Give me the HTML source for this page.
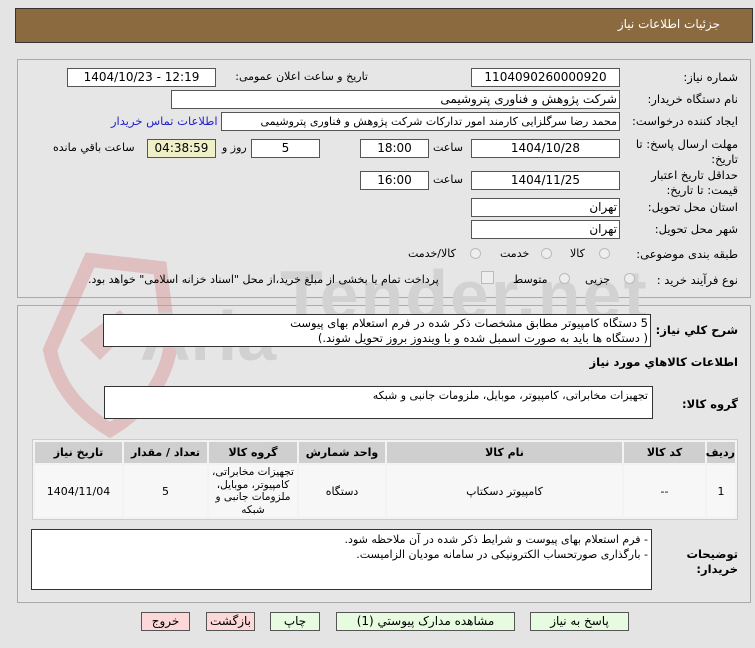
<!DOCTYPE html>
<html><head><meta charset="utf-8"><style>
body{margin:0;width:755px;height:648px;background:#e4e4e4;font-family:"DejaVu Sans","Liberation Sans",sans-serif;font-size:11px;color:#000;position:relative;overflow:hidden}
.a{position:absolute;white-space:nowrap}
.in{position:absolute;background:#fff;border:1px solid #555;box-sizing:border-box;height:19px;line-height:17px;text-align:center;font-size:12px;overflow:hidden}
.r{direction:rtl}
.lab{position:absolute;direction:rtl;text-align:right;right:17px;font-size:11.5px;white-space:nowrap}
.rad{position:absolute;width:11px;height:11px;border-radius:50%;border:1px solid #bbb;background:#eee;box-sizing:border-box}
.btn{position:absolute;top:612px;height:19px;border:1px solid #555;box-sizing:border-box;background:#e6fbe0;text-align:center;line-height:17px;font-size:12px}
table{border-collapse:separate;border-spacing:2px;position:absolute;left:32px;top:439px;width:706px;background:#f3f3f3;border:1px solid #ccc;table-layout:fixed}
th{background:#cfcfcf;height:21px;font-size:11px;padding:0}
td{background:#f7f7f7;text-align:center;font-size:11px;height:52px;padding:0;overflow:hidden}
</style></head><body>
<div class="a" style="left:15px;top:8px;width:738px;height:35px;background:#8b6a40;border:1px solid #333;box-sizing:border-box"></div>
<div class="a r" style="right:35px;top:17px;color:#fff;font-size:12px">جزئیات اطلاعات نیاز</div>

<div class="a" style="left:17px;top:59px;width:734px;height:239px;border:1px solid #aaa;box-sizing:border-box;background:#e6e6e6"></div>
<div class="a" style="left:17px;top:305px;width:734px;height:298px;border:1px solid #aaa;box-sizing:border-box;background:#e6e6e6"></div>

<!-- watermark -->
<svg class="a" style="left:20px;top:250px;opacity:.45" width="260" height="200" viewBox="0 0 260 200">
<path d="M70 10 L140 18 L150 100 Q140 150 90 180 Q40 150 30 100 Z" fill="none" stroke="#d89090" stroke-width="14"/>
<path d="M60 90 L100 60 L115 75 L80 110 Z" fill="#d89898"/>
<text x="120" y="110" font-family="Liberation Sans" font-size="70" font-weight="bold" fill="#b8b8b8">Aria</text>
</svg>
<div class="a" style="left:280px;top:255px;font-size:70px;font-weight:bold;color:#d2d2d2;letter-spacing:2px;font-family:'Liberation Sans'">Tender.net</div>

<div class="lab" style="top:70px">شماره نیاز:</div>
<div class="in" style="left:471px;top:68px;width:149px">1104090260000920</div>
<div class="a r" style="left:220px;top:70px;width:148px;text-align:right">تاریخ و ساعت اعلان عمومی:</div>
<div class="in" style="left:67px;top:68px;width:149px">1404/10/23 - 12:19</div>

<div class="lab" style="top:92px">نام دستگاه خریدار:</div>
<div class="in r" style="left:171px;top:90px;width:449px;text-align:right;padding-right:2px">شرکت پژوهش و فناوری پتروشیمی</div>

<div class="lab" style="top:114px">ایجاد کننده درخواست:</div>
<div class="in r" style="left:221px;top:112px;width:399px;text-align:right;padding-right:2px;font-size:11px">محمد رضا سرگلزایی کارمند امور تدارکات شرکت پژوهش و فناوری پتروشیمی</div>
<div class="a r" style="left:111px;top:114px;color:#2222cc;font-size:11.5px">اطلاعات تماس خریدار</div>

<div class="lab" style="top:137px;line-height:15px">مهلت ارسال پاسخ: تا<br>تاریخ:</div>
<div class="in" style="left:471px;top:139px;width:149px">1404/10/28</div>
<div class="a r" style="left:433px;top:141px">ساعت</div>
<div class="in" style="left:360px;top:139px;width:69px">18:00</div>
<div class="in" style="left:251px;top:139px;width:69px">5</div>
<div class="a r" style="left:222px;top:141px">روز و</div>
<div class="in" style="left:147px;top:139px;width:69px;background:#f0f0c8">04:38:59</div>
<div class="a r" style="left:53px;top:141px">ساعت باقي مانده</div>

<div class="lab" style="top:168px;line-height:15px">حداقل تاریخ اعتبار<br>قیمت: تا تاریخ:</div>
<div class="in" style="left:471px;top:171px;width:149px">1404/11/25</div>
<div class="a r" style="left:433px;top:173px">ساعت</div>
<div class="in" style="left:360px;top:171px;width:69px">16:00</div>

<div class="lab" style="top:200px">استان محل تحویل:</div>
<div class="in r" style="left:471px;top:198px;width:149px;text-align:right;padding-right:2px">تهران</div>
<div class="lab" style="top:222px">شهر محل تحویل:</div>
<div class="in r" style="left:471px;top:220px;width:149px;text-align:right;padding-right:2px">تهران</div>

<div class="lab" style="top:247px">طبقه بندی موضوعی:</div>
<div class="rad" style="left:599px;top:248px"></div><div class="a r" style="left:570px;top:247px">کالا</div>
<div class="rad" style="left:541px;top:248px"></div><div class="a r" style="left:500px;top:247px">خدمت</div>
<div class="rad" style="left:470px;top:248px"></div><div class="a r" style="left:408px;top:247px">کالا/خدمت</div>

<div class="lab" style="top:273px">نوع فرآیند خرید :</div>
<div class="rad" style="left:624px;top:273px"></div><div class="a r" style="left:585px;top:273px">جزیی</div>
<div class="rad" style="left:559px;top:273px"></div><div class="a r" style="left:513px;top:273px">متوسط</div>
<div class="a" style="left:481px;top:271px;width:11px;height:11px;border:1px solid #bbb;background:#eee"></div>
<div class="a r" style="left:88px;top:273px">پرداخت تمام یا بخشی از مبلغ خرید،از محل "اسناد خزانه اسلامی" خواهد بود.</div>

<div class="lab" style="top:323px;font-weight:bold">شرح کلي نیاز:</div>
<div class="a r" style="left:103px;top:314px;width:548px;height:33px;background:#fff;border:1px solid #333;box-sizing:border-box;padding:1px 2px;line-height:15px;text-align:right;font-size:11.5px">5 دستگاه کامپیوتر مطابق مشخصات ذکر شده در فرم استعلام بهای پیوست<br>( دستگاه ها باید به صورت اسمبل شده و با ویندوز بروز تحویل شوند.)</div>
<div class="lab" style="top:355px;font-weight:bold">اطلاعات کالاهاي مورد نیاز</div>

<div class="lab" style="top:397px;font-weight:bold">گروه کالا:</div>
<div class="a r" style="left:104px;top:386px;width:549px;height:33px;background:#fff;border:1px solid #333;box-sizing:border-box;padding:2px 4px;text-align:right">تجهیزات مخابراتی، کامپیوتر، موبایل، ملزومات جانبی و شبکه</div>

<table class="r">
<col style="width:28px"><col style="width:81px"><col style="width:235px"><col style="width:86px"><col style="width:88px"><col style="width:83px"><col>
<tr><th>ردیف</th><th>کد کالا</th><th>نام کالا</th><th>واحد شمارش</th><th>گروه کالا</th><th>تعداد / مقدار</th><th>تاریخ نیاز</th></tr>
<tr><td>1</td><td>--</td><td>کامپیوتر دسکتاپ</td><td>دستگاه</td><td style="line-height:12.5px;font-size:10.5px">تجهیزات مخابراتی، کامپیوتر، موبایل، ملزومات جانبی و شبکه</td><td>5</td><td>1404/11/04</td></tr>
</table>

<div class="lab" style="top:547px;font-weight:bold;line-height:15px">توضیحات<br>خریدار:</div>
<div class="a r" style="left:31px;top:529px;width:621px;height:61px;background:#fff;border:1px solid #333;box-sizing:border-box;padding:2px 3px;line-height:15px;text-align:right">- فرم استعلام بهای پیوست و شرایط ذکر شده در آن ملاحظه شود.<br>- بارگذاری صورتحساب الکترونیکی در سامانه مودیان الزامیست.</div>

<div class="btn r" style="left:530px;width:99px">پاسخ به نیاز</div>
<div class="btn r" style="left:336px;width:179px">مشاهده مدارک پیوستي (1)</div>
<div class="btn r" style="left:270px;width:50px">چاپ</div>
<div class="btn r" style="left:206px;width:49px;background:#fcd8d8">بازگشت</div>
<div class="btn r" style="left:141px;width:49px;background:#fcd8d8">خروج</div>
</body></html>
